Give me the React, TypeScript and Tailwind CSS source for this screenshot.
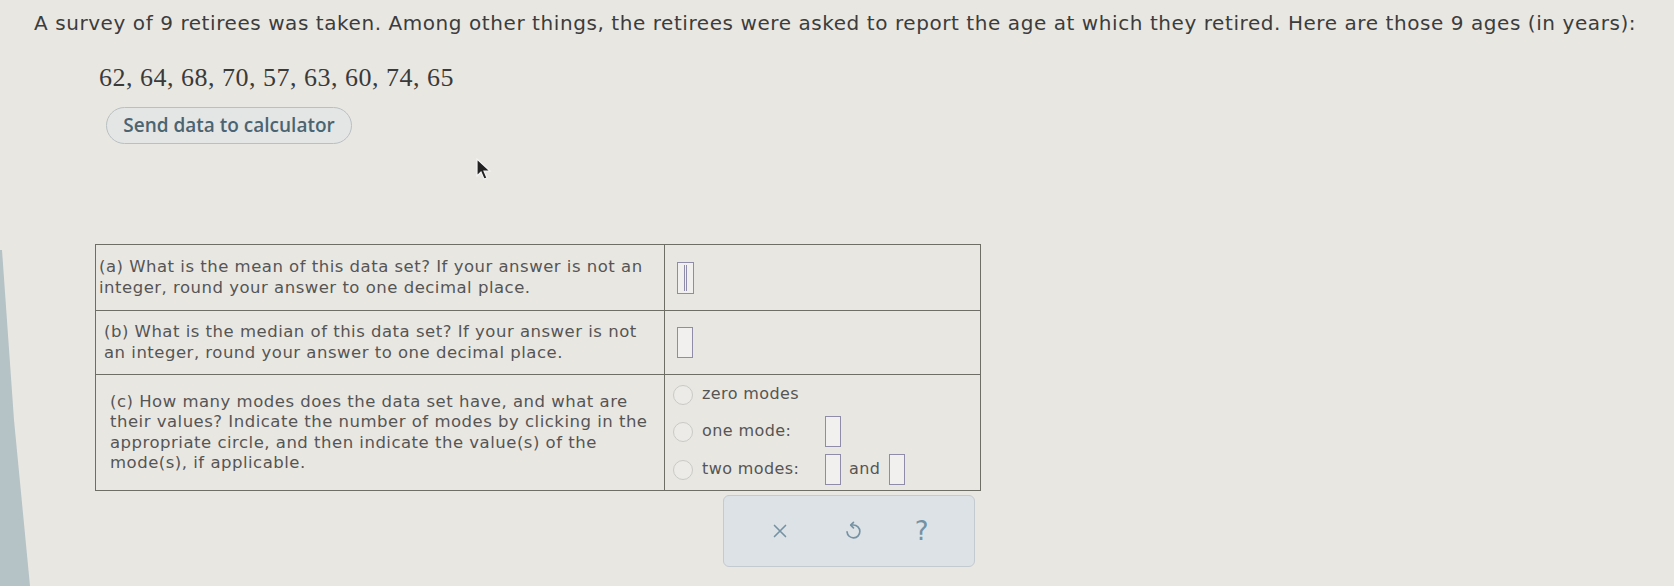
function AnswerBox({ focused = false }: { focused?: boolean }) {
  if (focused) {
    return (
      <div className="relative w-[17px] h-[32px] border border-[#8e8ca8] bg-[#f1f0ee]">
        <div className="absolute left-[6px] top-[2px] bottom-[2px] w-[3px] border-x border-[#8e8ca8]" />
      </div>
    )
  }
  return <div className="w-[16px] h-[31px] border border-[#8e8ca8] bg-[#f1f0ee]" />
}

function Radio() {
  return <div className="w-[20px] h-[20px] rounded-full border border-[#c9c9c6] bg-[#ecebe8]" />
}

export default function App() {
  return (
    <div
      className="relative min-h-[586px] w-full overflow-hidden bg-[#e9e7e2] text-[#3f3f3f]"
      style={{ fontFamily: '"DejaVu Sans", Verdana, sans-serif' }}
    >
      {/* screen bezel edge */}
      <svg className="absolute left-0 top-0" width="40" height="586" viewBox="0 0 40 586">
        <polygon points="0,250 2,250 14,420 30,586 0,586" fill="#b5c2c6" />
      </svg>

      <div className="pl-[34px] pt-[9px]">
        <p className="whitespace-nowrap text-[20px] leading-[28px] tracking-[0.57px] text-[#3c3c3c]">
          A survey of 9 retirees was taken. Among other things, the retirees were asked to report the age at which they retired. Here are those 9 ages (in years):
        </p>

        <p
          className="ml-[65px] mt-[25px] text-[26px] leading-[32px] tracking-[0.5px] text-[#3a3a3a]"
          style={{ fontFamily: '"Liberation Serif", "Times New Roman", serif' }}
        >
          62, 64, 68, 70, 57, 63, 60, 74, 65
        </p>

        <button
          className="ml-[72px] mt-[13px] h-[37px] w-[246px] rounded-full border border-[#b9c0c2] bg-[#e4e6e5] text-[19px] font-semibold text-[#4c6470]"
          style={{ fontFamily: '"Open Sans", Lato, sans-serif' }}
        >
          Send data to calculator
        </button>

        <table className="ml-[61px] mt-[100px] w-[886px] table-fixed border-collapse text-[16.5px] leading-[20.5px] tracking-[0.5px] text-[#555]">
          <colgroup>
            <col className="w-[569px]" />
            <col />
          </colgroup>
          <tbody>
            <tr className="h-[66px]">
              <td className="whitespace-nowrap border border-[#6e6e66] pl-[3px] align-middle">
                (a) What is the mean of this data set? If your answer is not an
                <br />
                integer, round your answer to one decimal place.
              </td>
              <td className="border border-[#6e6e66] pl-[12px] align-middle">
                <AnswerBox focused />
              </td>
            </tr>
            <tr className="h-[64px]">
              <td className="whitespace-nowrap border border-[#6e6e66] pl-[8px] align-middle">
                (b) What is the median of this data set? If your answer is not
                <br />
                an integer, round your answer to one decimal place.
              </td>
              <td className="border border-[#6e6e66] pl-[12px] align-middle">
                <AnswerBox />
              </td>
            </tr>
            <tr className="h-[116px]">
              <td className="whitespace-nowrap border border-[#6e6e66] pl-[14px] align-middle">
                (c) How many modes does the data set have, and what are
                <br />
                their values? Indicate the number of modes by clicking in the
                <br />
                appropriate circle, and then indicate the value(s) of the
                <br />
                mode(s), if applicable.
              </td>
              <td className="border border-[#6e6e66] pl-[8px] align-middle text-[16px] tracking-[0.4px]">
                <div className="flex flex-col gap-[8px]">
                  <div className="flex h-[28px] items-center gap-[9px]">
                    <Radio />
                    <span>zero modes</span>
                  </div>
                  <div className="flex h-[30px] items-center gap-[9px]">
                    <Radio />
                    <span className="w-[114px]">one mode:</span>
                    <AnswerBox />
                  </div>
                  <div className="flex h-[30px] items-center gap-[9px]">
                    <Radio />
                    <span className="w-[114px]">two modes:</span>
                    <AnswerBox />
                    <span className="-ml-[1px]">and</span>
                    <AnswerBox />
                  </div>
                </div>
              </td>
            </tr>
          </tbody>
        </table>

        <div className="ml-[689px] mt-[4px] flex h-[72px] w-[252px] items-center justify-around rounded-md border border-[#c3cad0] bg-[#dde2e6] px-[20px] text-[#7592a3]">
          <svg width="22" height="22" viewBox="0 0 24 24" fill="none" stroke="currentColor" strokeWidth="1.8" strokeLinecap="round">
            <path d="M6 6l12 12M18 6L6 18" />
          </svg>
          <svg width="22" height="22" viewBox="0 0 24 24" fill="none" stroke="currentColor" strokeWidth="1.8" strokeLinecap="round" strokeLinejoin="round">
            <path d="M10 5.5h2.5a7 7 0 1 1-7 7.5" />
            <path d="M12.5 2.5l-3 3 3 3" />
          </svg>
          <span className="text-[26px] leading-none" style={{ fontFamily: '"DejaVu Sans", sans-serif' }}>?</span>
        </div>
      </div>

      {/* mouse cursor */}
      <svg className="absolute left-[476px] top-[158px]" width="16" height="24" viewBox="0 0 16 24">
        <path d="M1 1 L1 18 L5 14 L8 21 L11 20 L8 13 L14 13 Z" fill="#222" stroke="#f4f4f4" strokeWidth="1.2" />
      </svg>
    </div>
  )
}
